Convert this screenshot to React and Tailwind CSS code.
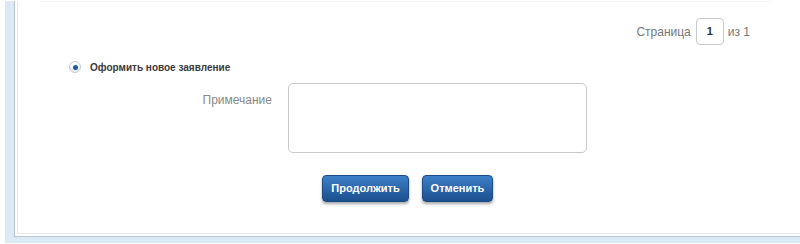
export default function App() {
  return (
    <div className="h-[244px] w-[800px] bg-white pl-[5px] pb-[2px] font-['Liberation_Sans',Arial,sans-serif]">
      <div className="h-full bg-[#dbeaf5] pl-[9px] pb-[6px]">
        <div className="h-full border-l border-b border-[#b7c6d1] bg-white pl-[2px] pb-[2px]">
          <div className="h-full border-l border-b border-[#e4e9ee]">
            {/* faint separator of the table above */}
            <div className="mt-[1px] ml-[22px] mr-[30px] h-px bg-[#f5f5f5]" />

            {/* pagination */}
            <div className="mt-[16px] flex items-center justify-end pr-[50px] text-[12px] text-[#777]">
              <span>Страница</span>
              <div className="ml-[5px] mr-[4px] flex h-[27px] w-[28px] items-center justify-center rounded-[4px] border border-[#c9c9c9] text-[11px] font-bold text-[#333]">
                1
              </div>
              <span>из 1</span>
            </div>

            {/* radio */}
            <div className="mt-[15px] flex h-[14px] items-center pl-[51px]">
              <div className="flex h-[12px] w-[12px] items-center justify-center rounded-full border border-[#c4c9cf] bg-gradient-to-b from-white to-[#e6eaee]">
                <div className="h-[5px] w-[5px] rounded-full bg-[#1f5aa0]" />
              </div>
              <span className="ml-[9px] text-[10px] font-bold text-[#3a3a3a]">
                Оформить новое заявление
              </span>
            </div>

            {/* note */}
            <div className="mt-[9px] flex">
              <div className="w-[254px] pt-[8px] text-right text-[12px] text-[#888]">Примечание</div>
              <textarea className="ml-[16px] h-[70px] w-[299px] resize-none rounded-[5px] border border-[#c8c8c8] bg-white outline-none" />
            </div>

            {/* buttons */}
            <div className="mt-[22px] flex gap-[13px] pl-[304px]">
              <button className="h-[27px] w-[87px] rounded-[4px] border border-[#1a4c88] bg-gradient-to-b from-[#3d80c8] to-[#1c4f8f] text-[11px] font-bold text-white shadow-[0_2px_3px_rgba(0,0,0,0.35)]">
                Продолжить
              </button>
              <button className="h-[27px] w-[71px] rounded-[4px] border border-[#1a4c88] bg-gradient-to-b from-[#3d80c8] to-[#1c4f8f] text-[11px] font-bold text-white shadow-[0_2px_3px_rgba(0,0,0,0.35)]">
                Отменить
              </button>
            </div>
          </div>
        </div>
      </div>
    </div>
  );
}
